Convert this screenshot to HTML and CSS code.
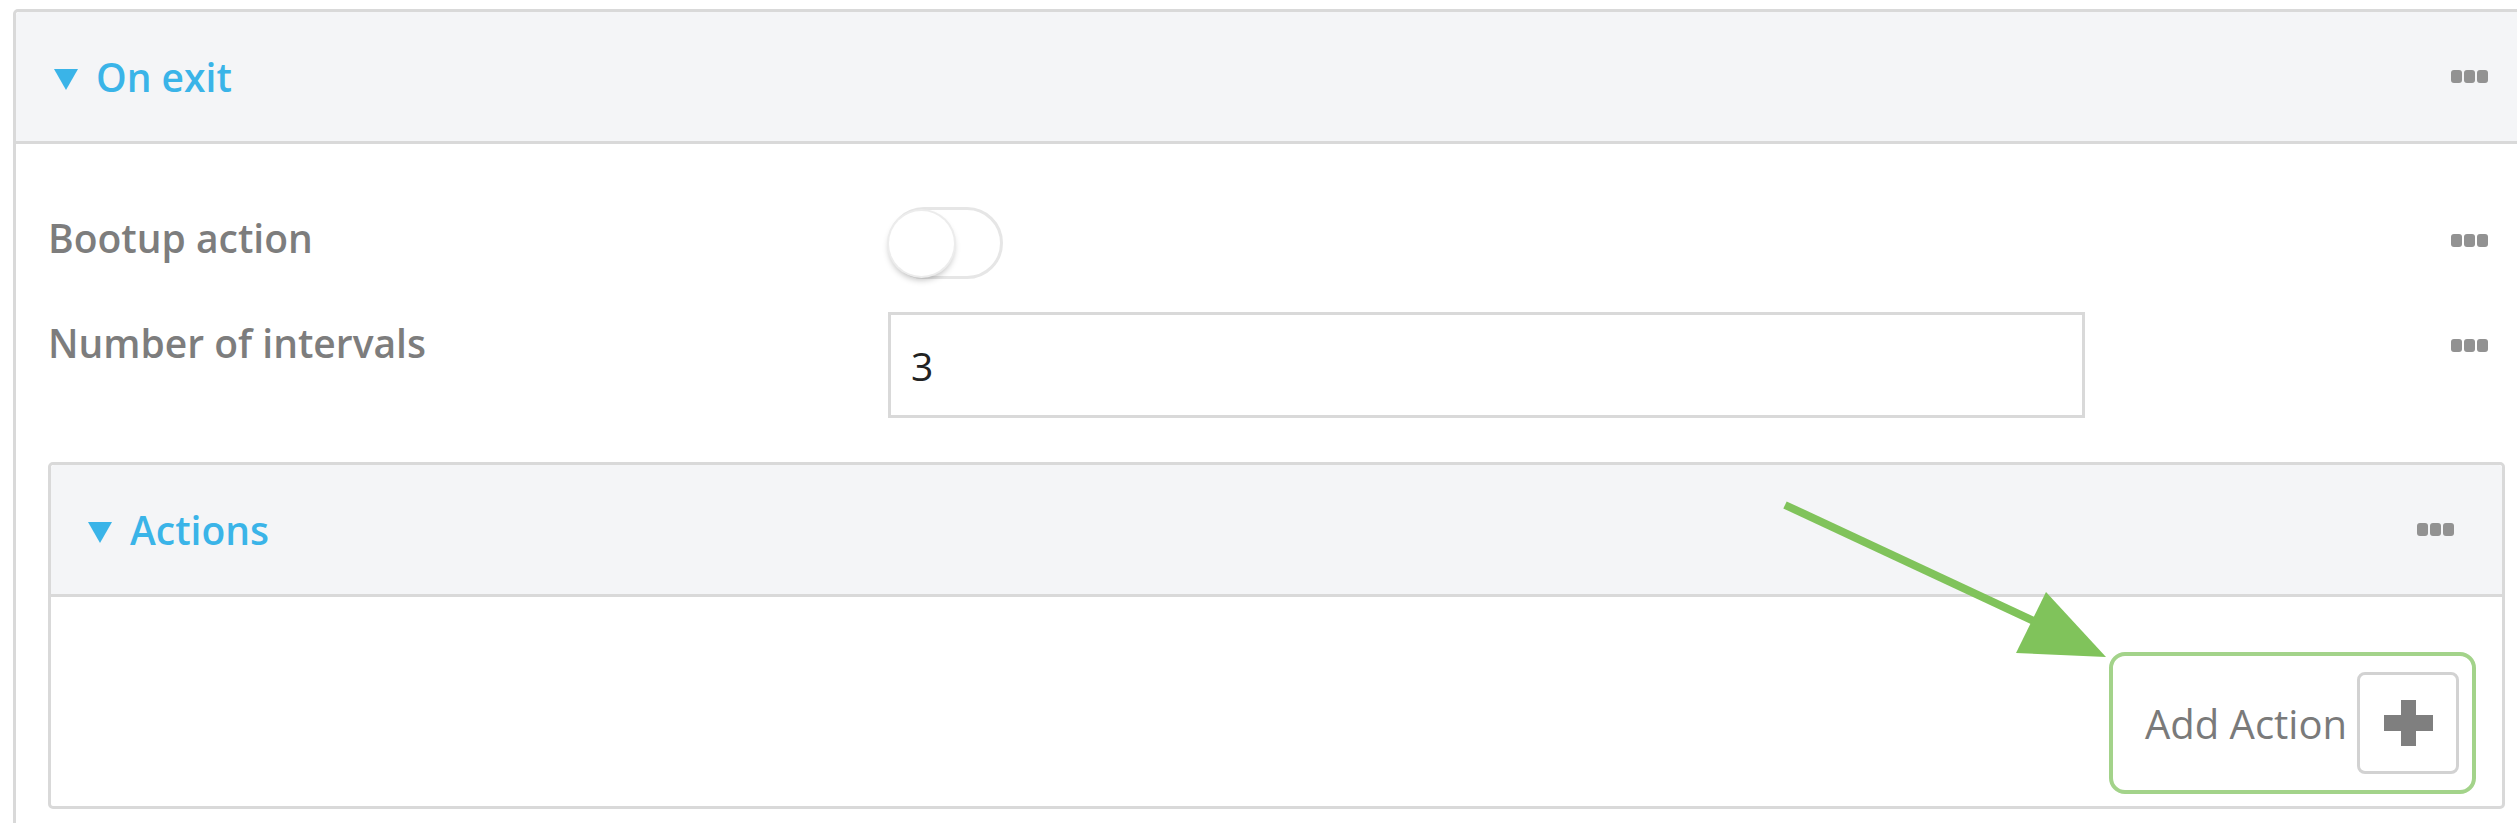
FILE: index.html
```html
<!DOCTYPE html>
<html lang="en">
<head>
  <meta charset="UTF-8" />
  <meta name="viewport" content="width=device-width, initial-scale=1" />
  <title>On exit</title>
  <link rel="stylesheet" href="styles.css">
</head>
<body>
  <div class="section outer">
    <div class="section-head">
      <span class="caret"></span>
      <span class="title">On exit</span>
      <span class="more">
        <svg width="37" height="13" viewBox="0 0 37 13"><rect x="0" y="0" width="11" height="13" rx="3"/><rect x="13" y="0" width="11" height="13" rx="3"/><rect x="26" y="0" width="11" height="13" rx="3"/></svg>
      </span>
    </div>

    <div class="section-body">
      <div class="rows">
        <div class="row">
          <label>Bootup action</label>
          <div class="control">
            <span class="switch"><span class="knob"></span></span>
          </div>
          <span class="more">
            <svg width="37" height="13" viewBox="0 0 37 13"><rect x="0" y="0" width="11" height="13" rx="3"/><rect x="13" y="0" width="11" height="13" rx="3"/><rect x="26" y="0" width="11" height="13" rx="3"/></svg>
          </span>
        </div>

        <div class="row">
          <label for="intervals">Number of intervals</label>
          <div class="control">
            <input id="intervals" class="field" type="text" value="3">
          </div>
          <span class="more">
            <svg width="37" height="13" viewBox="0 0 37 13"><rect x="0" y="0" width="11" height="13" rx="3"/><rect x="13" y="0" width="11" height="13" rx="3"/><rect x="26" y="0" width="11" height="13" rx="3"/></svg>
          </span>
        </div>
      </div>

      <div class="section inner">
        <div class="section-head">
          <span class="caret"></span>
          <span class="title">Actions</span>
          <span class="more">
            <svg width="37" height="13" viewBox="0 0 37 13"><rect x="0" y="0" width="11" height="13" rx="3"/><rect x="13" y="0" width="11" height="13" rx="3"/><rect x="26" y="0" width="11" height="13" rx="3"/></svg>
          </span>
        </div>
        <div class="actions-body">
          <div class="add-box">
            <span class="add-label">Add Action</span>
            <button class="add-btn" type="button">
              <svg width="49" height="46" viewBox="0 0 49 46"><rect x="17" y="0" width="15" height="46"/><rect x="0" y="15" width="49" height="16"/></svg>
            </button>
          </div>
        </div>
      </div>
    </div>
  </div>

  <svg class="pointer" width="2517" height="823" viewBox="0 0 2517 823">
    <line x1="1785" y1="505" x2="2040" y2="624" stroke="#80c35b" stroke-width="8" />
    <polygon points="2046,592 2106,657 2016,653" fill="#80c35b" />
  </svg>
</body>
</html>
```

FILE: styles.css
```css
body {
  margin: 0;
  font-family: "Open Sans", Arial, sans-serif;
  background: #fff;
  overflow: hidden;
  position: relative;
}

.section {
  border: 3px solid #d9d9d9;
  border-radius: 5px;
  background: #fff;
}

.section.outer {
  margin: 9px -20px 0 13px;
}

.section-head {
  display: flex;
  align-items: center;
  height: 129px;
  padding: 0 46px 0 38px;
  background: #f4f5f7;
  border-bottom: 3px solid #d9d9d9;
  border-radius: 4px 4px 0 0;
}

.section.inner {
  margin-top: 44px;
}

.section.inner .section-head {
  padding: 0 48px 0 37px;
}

.caret {
  width: 0;
  height: 0;
  border-left: 12px solid transparent;
  border-right: 12px solid transparent;
  border-top: 21px solid #3ab4e8;
  margin: 6px 18px 0 0;
}

.title {
  flex: 1;
  font-size: 39px;
  font-weight: 600;
  color: #3ab4e8;
}

.more {
  display: flex;
  align-items: center;
}

.more svg {
  fill: #929292;
}

.section-body {
  padding: 63px 29px 40px 32px;
}

.rows {
  display: flex;
  flex-direction: column;
  gap: 33px;
  padding-right: 17px;
}

.row {
  display: grid;
  grid-template-columns: 840px 1197px 1fr;
  align-items: start;
}

.row label {
  font-size: 39px;
  line-height: 53px;
  font-weight: 600;
  color: #7d7d7d;
  margin-top: 4px;
}

.row .more {
  justify-self: end;
  height: 53px;
  margin-top: 7px;
}

.switch {
  display: flex;
  align-items: center;
  width: 115px;
  height: 72px;
  box-sizing: border-box;
  border: 3px solid #e6e6e6;
  border-radius: 36px;
  background: #fff;
}

.knob {
  width: 65px;
  height: 65px;
  margin-left: -2px;
  border-radius: 50%;
  background: #fff;
  box-shadow: 0 0 0 2px #ececec, 0 4px 6px rgba(0, 0, 0, 0.25);
}

.field {
  display: block;
  width: 1197px;
  height: 106px;
  box-sizing: border-box;
  border: 3px solid #d9d9d9;
  padding: 0 20px;
  font-family: inherit;
  font-size: 39px;
  color: #222;
  outline: none;
  background: #fff;
}

.actions-body {
  display: flex;
  justify-content: flex-end;
  padding: 55px 26px 12px;
}

.add-box {
  display: flex;
  align-items: center;
  gap: 10px;
  padding: 16px 13px 16px 32px;
  border: 4px solid #a3d38a;
  border-radius: 16px;
}

.add-label {
  font-size: 40px;
  color: #7a7a7a;
}

.add-btn {
  display: flex;
  align-items: center;
  justify-content: center;
  width: 102px;
  height: 102px;
  box-sizing: border-box;
  padding: 0;
  border: 3px solid #d2d2d2;
  border-radius: 8px;
  background: #fff;
  cursor: pointer;
}

.add-btn svg {
  fill: #7f7f7f;
}

.pointer {
  position: absolute;
  left: 0;
  top: 0;
  pointer-events: none;
}
```
